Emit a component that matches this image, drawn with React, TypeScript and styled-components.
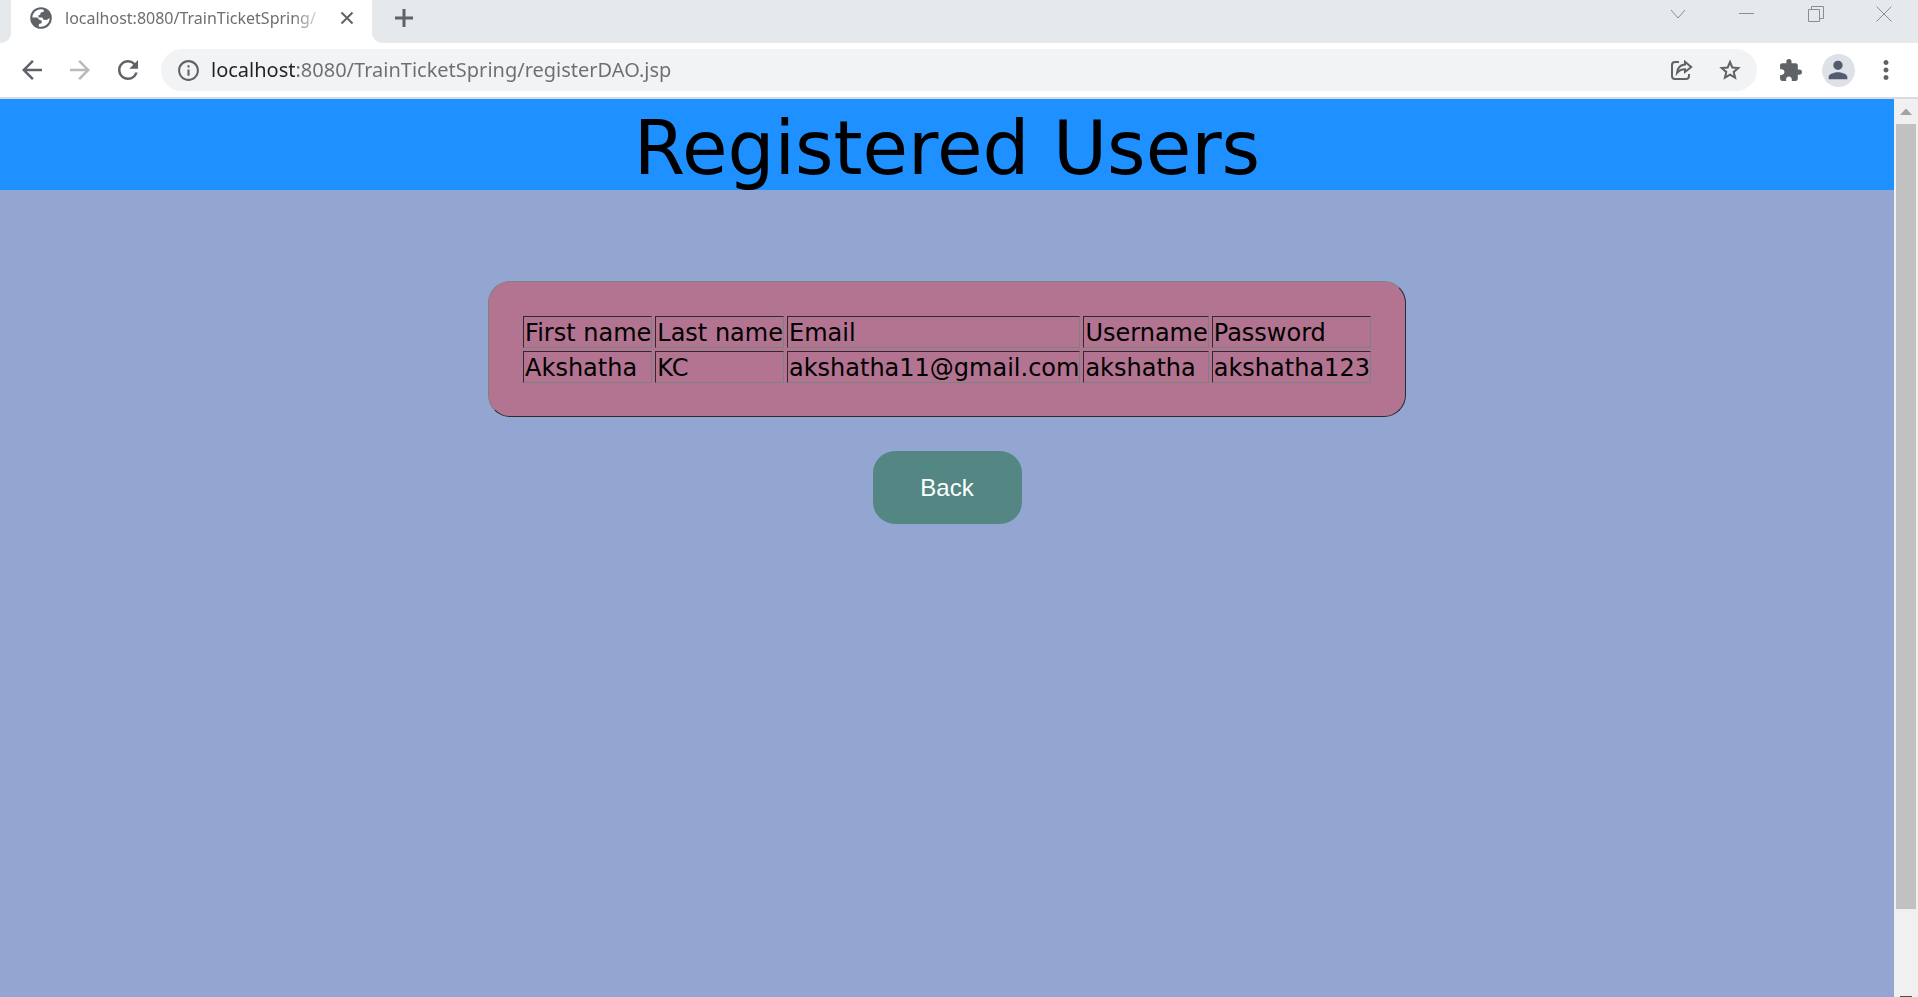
import React from "react";
import styled, { createGlobalStyle } from "styled-components";
import {
  MdArrowBack,
  MdArrowForward,
  MdRefresh,
  MdInfoOutline,
  MdExtension,
  MdPerson,
  MdMoreVert,
} from "react-icons/md";

const GlobalStyle = createGlobalStyle`
  * { box-sizing: border-box; }
  body { margin: 0; font-family: "DejaVu Sans", Verdana, sans-serif; }
`;

const uiFont = `"Noto Sans", "Open Sans", sans-serif`;

const Window = styled.div`
  display: flex;
  flex-direction: column;
  height: 100vh;
  overflow: hidden;
  background: #ffffff;
`;

const TabStrip = styled.div`
  display: flex;
  height: 43px;
  flex: none;
  background: #ffffff;
`;

const StripEdge = styled.div`
  width: 11px;
  background: #e5e9ec;
  border-bottom-right-radius: 10px;
`;

const Tab = styled.div`
  display: flex;
  align-items: center;
  width: 361px;
  height: 36px;
  padding: 0 15px 0 19px;
`;

const TabTitle = styled.span`
  flex: 1;
  margin: 0 8px 0 13px;
  white-space: nowrap;
  font: 16px/24px ${uiFont};
  color: #6b6f73;
  mask-image: linear-gradient(to right, #000 86%, rgba(0, 0, 0, 0.3) 95%);
`;

const StripRest = styled.div`
  display: flex;
  flex: 1;
  justify-content: space-between;
  background: #e5e9ec;
  border-bottom-left-radius: 10px;
`;

const IconButton = styled.button<{ $w: number; $h: number; $color?: string }>`
  display: flex;
  flex: none;
  align-items: center;
  justify-content: center;
  width: ${(p) => p.$w}px;
  height: ${(p) => p.$h}px;
  padding: 0;
  border: 0;
  background: none;
  color: ${(p) => p.$color ?? "#5f6368"};
`;

const WindowControls = styled.div`
  display: flex;
`;

const Toolbar = styled.div`
  display: flex;
  flex: none;
  align-items: center;
  height: 56px;
  padding: 0 8px 0 8px;
  border-bottom: 2px solid #d9dcdd;
`;

const AddressBar = styled.div`
  display: flex;
  flex: 1;
  align-items: center;
  height: 42px;
  margin: 0 9px 0 9px;
  padding: 0 3px 0 15px;
  border-radius: 21px;
  background: #f1f3f4;
`;

const Address = styled.input`
  flex: 1;
  min-width: 0;
  height: 30px;
  margin-left: 10px;
  padding: 0;
  border: 0;
  outline: 0;
  font: 20px/30px ${uiFont};
  color: #6b6f73;
  background: linear-gradient(to right, #202124 84px, #6b6f73 84px);
  background-clip: text;
  -webkit-background-clip: text;
  -webkit-text-fill-color: transparent;
`;

const Avatar = styled.span`
  display: flex;
  align-items: center;
  justify-content: center;
  width: 33px;
  height: 33px;
  border-radius: 50%;
  background: #dee1e6;
  color: #525b70;
`;

const Viewport = styled.div`
  display: flex;
  flex: 1;
  min-height: 0;
`;

const Page = styled.main`
  flex: 1;
  background: #93a6d1;
`;

const Heading = styled.h1`
  margin: 0;
  padding-top: 8px;
  background: #1e90ff;
  color: #000000;
  font-size: 74px;
  font-weight: 400;
  line-height: 83px;
  text-align: center;
`;

const Content = styled.div`
  display: flex;
  flex-direction: column;
  align-items: center;
  gap: 34px;
  padding-top: 91px;
`;

const UsersTable = styled.table`
  padding: 31px 31px 30px;
  border: 1px solid;
  border-color: #808080 #2c2c2c #2c2c2c #808080;
  border-radius: 22px;
  border-spacing: 3px;
  background: #b37491;
`;

const Cell = styled.td`
  padding: 2px 0 0 1px;
  border: 1px solid;
  border-color: #2c2c2c #808080 #808080 #2c2c2c;
  font-size: 24px;
  font-weight: 400;
  line-height: 28px;
  text-align: left;
`;

const BackButton = styled.button`
  width: 149px;
  height: 73px;
  border: 0;
  border-radius: 22px;
  background: #548783;
  color: #ffffff;
  font: 24px "Liberation Sans", Arial, sans-serif;
`;

const Scrollbar = styled.div`
  display: flex;
  flex: none;
  flex-direction: column;
  width: 24px;
  background: #f0f0f0;
`;

const Track = styled.div`
  flex: 1;
  padding: 0 2px;
`;

const Thumb = styled.div`
  height: 90%;
  background: #c1c1c1;
`;

const ScrollEnd = styled.div<{ $h: number }>`
  display: flex;
  flex: none;
  justify-content: center;
  height: ${(p) => p.$h}px;
  overflow: hidden;
`;

const columns = ["First name", "Last name", "Email", "Username", "Password"];
const users = [["Akshatha", "KC", "akshatha11@gmail.com", "akshatha", "akshatha123"]];

const Line = ({ d, size, width = 1 }: { d: string; size: number; width?: number }) => (
  <svg width={size} height={size} viewBox={`0 0 ${size} ${size}`} fill="none" stroke="currentColor" strokeWidth={width}>
    <path d={d} />
  </svg>
);

const Globe = () => (
  <svg width="22" height="22" viewBox="0 0 22 22">
    <circle cx="11" cy="11" r="10.800" fill="#5f6368" />
    <path
      d="M2.300 10.500C2.500 7 4.500 4.200 7.500 3c2.500-.9 5-.8 6.500 0l-.6 2-2.700.6-.5 2.200-2 .7.500 1.900h3.600l1.300 2.400 3 .2 3-2c.2 3-1.600 6.200-4.600 7.800-2.200 1.100-4.600 1.200-6.300.7l.2-2.600 2.600-.7.300-2.400-2.500-1.100-1.900-2.200z"
      fill="#ffffff"
    />
  </svg>
);

export default function App() {
  return (
    <Window>
      <GlobalStyle />
      <TabStrip>
        <StripEdge />
        <Tab>
          <Globe />
          <TabTitle>localhost:8080/TrainTicketSpring/</TabTitle>
          <IconButton $w={20} $h={20} aria-label="Close tab">
            <Line size={14} width={2} d="M1.5 1.5l11 11M12.5 1.5l-11 11" />
          </IconButton>
        </Tab>
        <StripRest>
          <IconButton $w={64} $h={36} aria-label="New tab">
            <Line size={18} width={3} d="M9 0v18M0 9h18" />
          </IconButton>
          <WindowControls>
            <IconButton $w={69} $h={28} $color="#8b8e90" aria-label="Search tabs">
              <Line size={16} d="M1 4l7 8 7-8" />
            </IconButton>
            <IconButton $w={69} $h={28} $color="#8b8e90" aria-label="Minimize">
              <Line size={16} d="M0 7.5h15" />
            </IconButton>
            <IconButton $w={69} $h={28} $color="#8b8e90" aria-label="Restore">
              <Line size={16} d="M.5 3.5h11v12h-11zM3.5 3.500v-3h12v12h-4" />
            </IconButton>
            <IconButton $w={68} $h={28} $color="#8b8e90" aria-label="Close window">
              <Line size={16} d="M.5 .5l15 15M15.500 .5l-15 15" />
            </IconButton>
          </WindowControls>
        </StripRest>
      </TabStrip>
      <Toolbar>
        <IconButton $w={48} $h={42} aria-label="Back">
          <MdArrowBack size={30} />
        </IconButton>
        <IconButton $w={48} $h={42} $color="#bababc" aria-label="Forward">
          <MdArrowForward size={30} />
        </IconButton>
        <IconButton $w={48} $h={42} aria-label="Reload">
          <MdRefresh size={30} />
        </IconButton>
        <AddressBar>
          <MdInfoOutline size={25} color="#5f6368" />
          <Address aria-label="Address" defaultValue="localhost:8080/TrainTicketSpring/registerDAO.jsp" />
          <IconButton $w={48} $h={42} aria-label="Share">
            <svg width="22" height="20" viewBox="0 0 22 20" fill="none" stroke="currentColor" strokeWidth="2">
              <path d="M8 2H4a3 3 0 0 0-3 3v11a3 3 0 0 0 3 3h11a3 3 0 0 0 3-3v-2" />
              <path d="M14 1.800L20.200 7 14 12V9.200C10 9.200 8 10.500 6 13 6.500 8 9 5 14 4.600Z" />
            </svg>
          </IconButton>
          <IconButton $w={48} $h={42} aria-label="Bookmark">
            <svg width="22" height="22" viewBox="0 0 22 22" fill="none" stroke="currentColor" strokeWidth="2">
              <path d="M11 3l2.300 5.500 6 .5-4.600 3.900 1.400 5.800L11 15.600l-5.100 3.100 1.400-5.800L2.700 9l6-.5z" />
            </svg>
          </IconButton>
        </AddressBar>
        <IconButton $w={48} $h={42} aria-label="Extensions">
          <MdExtension size={25} />
        </IconButton>
        <IconButton $w={48} $h={42} aria-label="Profile">
          <Avatar>
            <MdPerson size={28} />
          </Avatar>
        </IconButton>
        <IconButton $w={48} $h={42} aria-label="Menu">
          <MdMoreVert size={30} />
        </IconButton>
      </Toolbar>
      <Viewport>
        <Page>
          <Heading>Registered Users</Heading>
          <Content>
            <UsersTable>
              <thead>
                <tr>
                  {columns.map((c) => (
                    <Cell as="th" scope="col" key={c}>
                      {c}
                    </Cell>
                  ))}
                </tr>
              </thead>
              <tbody>
                {users.map((row) => (
                  <tr key={row[2]}>
                    {row.map((value, i) => (
                      <Cell key={columns[i]}>{value}</Cell>
                    ))}
                  </tr>
                ))}
              </tbody>
            </UsersTable>
            <BackButton type="button">Back</BackButton>
          </Content>
        </Page>
        <Scrollbar>
          <ScrollEnd $h={25}>
            <svg width="12" height="25" viewBox="0 0 12 25">
              <path d="M0 16l5.500-6h1l5.500 6z" fill="#a3a3a3" />
            </svg>
          </ScrollEnd>
          <Track>
            <Thumb />
          </Track>
          <ScrollEnd $h={1}>
            <svg width="12" height="6" viewBox="0 0 12 6">
              <path d="M0 0h12v1l-6 5-6-5z" fill="#505050" />
            </svg>
          </ScrollEnd>
        </Scrollbar>
      </Viewport>
    </Window>
  );
}
